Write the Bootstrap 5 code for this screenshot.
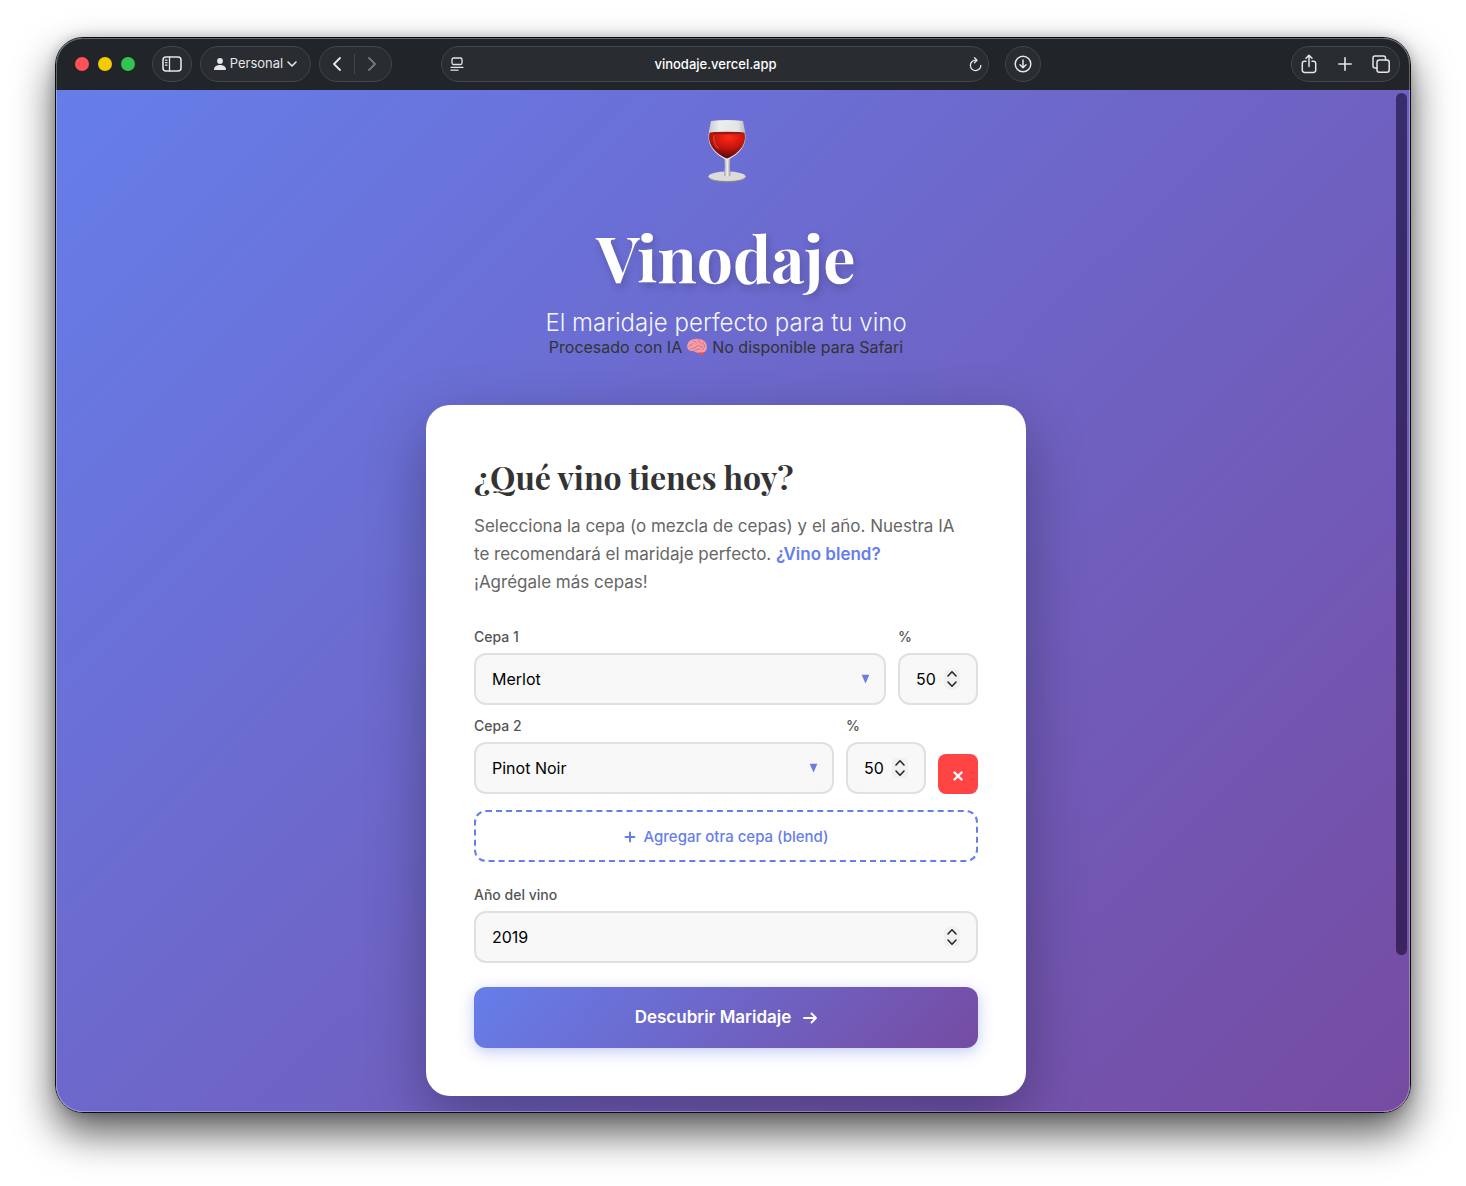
<!DOCTYPE html>
<html lang="es">
<head>
<meta charset="utf-8">
<meta name="viewport" content="width=device-width, initial-scale=1">
<title>Vinodaje</title>
<link href="https://cdn.jsdelivr.net/npm/bootstrap@5.3.0/dist/css/bootstrap.min.css" rel="stylesheet">
<script src="https://cdn.jsdelivr.net/npm/bootstrap@5.3.0/dist/js/bootstrap.bundle.min.js" defer></script>
<style>
  body { font-family: Inter, "Liberation Sans", sans-serif; background: #fff; color: #333; }
  .browser { margin: 37px 55px 73px; border: 1px solid #0b0b10; border-radius: 28px; overflow: hidden; box-shadow: 0 20px 40px rgba(0,0,0,.65), 0 0 12px rgba(0,0,0,.2); }
  .browser::after { content: ""; position: absolute; inset: 0; border: 1px solid rgba(255,255,255,.3); border-radius: 27px; pointer-events: none; }
  .toolbar { height: 52px; padding: 0 10px 0 19px; background: #212429; color: #e4e6e8; font-size: 13px; font-weight: 500; }
  .side { flex: 1 1 0; }
  .lights { gap: 9px; }
  .dot { width: 14px; height: 14px; border-radius: 50%; }
  .dot-r { background: #ff5257; } .dot-y { background: #f5cb00; } .dot-g { background: #2fc553; }
  .pill { height: 36px; background: #292c31; border: 1px solid #42454a; border-radius: 18px; color: inherit; }
  .pill button { background: none; border: 0; padding: 0; color: inherit; display: flex; }
  .round { width: 36px; }
  .panel-btn { width: 40px; margin-left: 9px; }
  .profile { width: 111px; }
  .nav-pill { width: 73px; padding: 0 14px 0 12px; }
  .nav-pill .split { width: 1px; height: 20px; background: #42454a; }
  .dim { opacity: .4; }
  .address { width: 548px; padding: 0 6px 0 8px; }
  .address input { background: none; border: 0; color: #fff; text-align: center; min-width: 0; outline: 0; font-weight: 500; padding: 2px 2px 0 0; }
  .centre { margin-left: 7px; }
  .share { width: 109px; padding: 0 9px; }
  svg { fill: none; stroke: currentColor; stroke-linecap: round; stroke-linejoin: round; display: block; flex-shrink: 0; }
  svg.solid { stroke: none; }
  .page { background: linear-gradient(135deg, #667eea 0%, #764ba2 100%); padding: 29px 14px 16px 0; }
  .thumb { position: absolute; top: 3px; right: 3px; width: 11px; height: 862px; border-radius: 6px; background: rgba(20,10,50,.6); }
  .title { font-family: "Playfair Display", "Liberation Serif", serif; font-weight: 700; font-size: 64px; line-height: 74px; margin: 37px 0 14px; color: #fff; text-shadow: 2px 4px 8px rgba(0,0,0,.2); }
  .tagline { font-size: 24px; line-height: 29px; font-weight: 300; color: rgba(255,255,255,.95); }
  .notice { font-size: 16px; line-height: 20px; }
  .wine-card { width: 600px; max-width: 100%; margin: 48px auto 0; padding: 48px; background: #fff; border-radius: 24px; box-shadow: 0 20px 60px rgba(0,0,0,.3); }
  .wine-card h2 { font-family: "Playfair Display", "Liberation Serif", serif; font-weight: 700; font-size: 32px; line-height: 47px; margin-bottom: 12px; }
  .intro { font-size: 17px; line-height: 28px; color: #666; margin-bottom: 32px; padding-right: 20px; }
  .intro a { color: #667eea; font-weight: 600; text-decoration: none; }
  .field-label { display: block; font-size: 14px; line-height: 17px; font-weight: 500; color: #555; margin-bottom: 8px; }
  .field { height: 52px; border: 2px solid #e0e0e0; border-radius: 12px; background: #f8f8f8; padding: 0 16px; font-size: 16px; color: #000; appearance: none; -moz-appearance: textfield; }
  .field::-webkit-inner-spin-button { -webkit-appearance: none; margin: 0; }
  .pct { width: 80px; flex-shrink: 0; }
  .mark-end { position: absolute; right: 16px; top: 50%; transform: translateY(-50%); pointer-events: none; }
  .stepper { color: #222; right: 18px; }
  .gap-field { gap: 12px; }
  .remove { width: 40px; height: 40px; border: 0; border-radius: 8px; background: #ff4444; color: #fff; padding: 4px 0 0; }
  .add { height: 52px; margin: 16px 0 24px; padding: 2px 0 0; border: 2px dashed #667eea; border-radius: 12px; background: #fff; color: #667eea; font-size: 15px; font-weight: 500; }
  .go { height: 61px; margin-top: 24px; border: 0; border-radius: 12px; background: linear-gradient(135deg, #667eea 0%, #764ba2 100%); color: #fff; font-size: 17px; font-weight: 600; box-shadow: 0 4px 15px rgba(102,126,234,.4); }
</style>
</head>
<body>
<div class="browser position-relative">
  <header class="toolbar d-flex align-items-center">
    <div class="side d-flex align-items-center gap-2">
      <div class="lights d-flex"><span class="dot dot-r"></span><span class="dot dot-y"></span><span class="dot dot-g"></span></div>
      <button class="pill panel-btn d-flex align-items-center justify-content-center p-0" aria-label="Barra lateral">
        <svg width="20" height="16" viewBox="0 0 20 16" stroke-width="1.6"><rect x="1" y="1" width="18" height="14" rx="3"/><path d="M7.500 1v14M3.500 4.200h1.500M3.500 6.700h1.500M3.500 9.200h1.500" stroke-width="1.300"/></svg>
      </button>
      <button class="pill profile d-flex align-items-center px-0 justify-content-center">
        <svg class="solid" width="12" height="12" viewBox="0 0 12 12"><g fill="currentColor"><circle cx="6" cy="3" r="2.900"/><path d="M.5 12c-.4 0-.5-.4-.5-.8C.2 8.700 2.800 7.100 6 7.100s5.800 1.600 6 4.100c0 .4-.1.8-.5.8z"/></g></svg>
        <span class="ms-1 me-1">Personal</span>
        <svg width="10" height="6" viewBox="0 0 10 6" stroke-width="1.600"><path d="M1 1l4 4 4-4"/></svg>
      </button>
      <div class="pill nav-pill d-flex align-items-center justify-content-between">
        <button aria-label="Atrás"><svg width="9" height="14" viewBox="0 0 9 14" stroke-width="1.800"><path d="M8 1L2 7l6 6"/></svg></button>
        <span class="split"></span>
        <button class="dim" aria-label="Adelante"><svg width="9" height="14" viewBox="0 0 9 14" stroke-width="1.800"><path d="M1 1l6 6-6 6"/></svg></button>
      </div>
    </div>
    <div class="centre d-flex align-items-center gap-3">
      <div class="pill address d-flex align-items-center">
        <svg width="14" height="14" viewBox="0 0 14 14" stroke-width="1.300"><rect x="2" y="1" width="10" height="6.500" rx="1.500"/><path d="M1 10.300h12M1 13.200h7"/></svg>
        <input class="flex-grow-1" type="text" value="vinodaje.vercel.app" aria-label="Dirección">
        <button aria-label="Recargar"><svg width="13" height="15" viewBox="0 0 13 15" stroke-width="1.300"><path d="M7 3.200H6.500a5.200 5.200 0 1 0 5.300 5.200M5.500.8L8 3.200 5.500 5.700"/></svg></button>
      </div>
      <button class="pill round d-flex align-items-center justify-content-center p-0" aria-label="Descargas">
        <svg width="18" height="18" viewBox="0 0 18 18" stroke-width="1.500"><circle cx="9" cy="9" r="7.800"/><path d="M9 5v7.500M6 9.700l3 3 3-3"/></svg>
      </button>
    </div>
    <div class="side d-flex justify-content-end">
      <div class="pill share d-flex align-items-center justify-content-between">
        <button aria-label="Compartir"><svg width="16" height="20" viewBox="0 0 16 20" stroke-width="1.500"><path d="M5 7.200H3.500A2.200 2.200 0 0 0 1.300 9.400v6.800a2.200 2.200 0 0 0 2.200 2.200h9a2.200 2.200 0 0 0 2.200-2.200V9.400a2.200 2.200 0 0 0-2.200-2.200H11M8 12.500V1.500M5 4.200l3-3 3 3"/></svg></button>
        <button aria-label="Nueva pestaña"><svg width="14" height="14" viewBox="0 0 14 14" stroke-width="1.600"><path d="M7 .8v12.400M.8 7h12.400"/></svg></button>
        <button aria-label="Pestañas"><svg width="18" height="18" viewBox="0 0 18 18" stroke-width="1.500"><rect x="5" y="5" width="12.200" height="12.200" rx="2.300"/><path d="M5 13H3a2 2 0 0 1-2-2V3a2 2 0 0 1 2-2h8.500a2 2 0 0 1 2 2v2"/></svg></button>
      </div>
    </div>
  </header>

  <main class="page position-relative">
    <div class="thumb"></div>
    <div class="d-flex flex-column align-items-center text-center">
      <svg class="solid" width="64" height="64" viewBox="0 0 64 64" role="img" aria-label="Copa de vino">
        <defs>
          <radialGradient id="wine" cx=".55" cy=".15" r=".85"><stop offset="0" stop-color="#ff2a18"/><stop offset=".5" stop-color="#c9150c"/><stop offset="1" stop-color="#4d0b10"/></radialGradient>
          <linearGradient id="bowl" x1="0" x2="1"><stop offset="0" stop-color="#c9c9cc"/><stop offset=".3" stop-color="#eceeee"/><stop offset=".8" stop-color="#e2e4e5"/><stop offset="1" stop-color="#b5b6bb"/></linearGradient>
          <linearGradient id="stem" x1="0" x2="1"><stop offset="0" stop-color="#9c9ca5"/><stop offset=".5" stop-color="#f2f2f4"/><stop offset="1" stop-color="#96959c"/></linearGradient>
        </defs>
        <ellipse cx="33" cy="58.500" rx="18.500" ry="5" fill="#8c8992"/>
        <ellipse cx="33" cy="57.300" rx="18.500" ry="4.800" fill="#dcdcda"/>
        <path d="M30 38h6.500l-.8 9 .8 9.500c-1.500 1.300-5 1.300-6.500 0l.8-9.500z" fill="url(#stem)"/>
        <path d="M17 2Q33 0 49 2c1 6 3 12 2.500 18C50.500 31 40 38 33 41 26 38 15.500 31 14.500 20 14 14 16 8 17 2z" fill="url(#bowl)"/>
        <path d="M15.500 14h35c.5 3 .6 5 .2 7C49 31 39.500 37 33 39.500 26.500 37 17 31 15.300 21c-.4-2-.2-4 .2-7z" fill="url(#wine)"/>
        <ellipse cx="33" cy="14" rx="17.300" ry="1.300" fill="#9b1715"/>
        <path d="M20 17c-1 5 1 9 4 12" stroke="#ff7565" stroke-width="1.500" opacity=".4"/>
      </svg>
      <h1 class="title">Vinodaje</h1>
      <p class="tagline mb-0">El maridaje perfecto para tu vino</p>
      <p class="notice mb-0 d-flex align-items-center justify-content-center">Procesado con IA
        <svg class="solid mx-1" width="22" height="20" viewBox="0 0 22 20" role="img" aria-label="Cerebro">
          <path d="M11.500 14.500c2 0 5-.5 6.500.5 0 2-1 3.700-2.300 3.800-1.800-.4-3.700-1.800-4.200-4.300z" fill="#c9596e"/>
          <path d="M1.300 10.500C.6 6 3.500 3 7 2.200c4-1.200 9-.5 11.800 2.300 2.300 2.200 2.600 6.500 1.200 9-1.500 2.200-4 2-6 1.700-2.500 1-5 .5-6.500-1.500-2.500.7-5.700-.2-6.200-3.200z" fill="#f49da6"/>
          <path d="M3 9.500c1.500-2.500 3-1 4-3M7 3.500c1 2 3 .5 4 2.500M12.500 3c-.5 2 2 2 3 4M4.500 12c2-1.500 4 0 5.500-2s3.500-2 4.500-.5M9 13.500c2-.5 3-2 5-1.500M17 5.500c.5 2 2 2.500 1.500 4.500M15.500 9c1 1 .5 2.500 2 3.500" stroke="#d9707f" stroke-width="1"/>
        </svg>
        No disponible para Safari</p>
    </div>

    <form class="wine-card" onsubmit="return false">
      <h2>¿Qué vino tienes hoy?</h2>
      <p class="intro">Selecciona la cepa (o mezcla de cepas) y el año. Nuestra IA te recomendará el maridaje perfecto. <a href="#">¿Vino blend?</a> ¡Agrégale más cepas!</p>

      <div class="d-flex flex-column gap-field">
        <div class="d-flex align-items-end gap-field">
          <div class="flex-grow-1">
            <label class="field-label" for="cepa1">Cepa 1</label>
            <div class="position-relative">
              <select class="field w-100" id="cepa1"><option>Merlot</option><option>Malbec</option></select>
              <svg class="mark-end solid" width="9" height="9" viewBox="0 0 9 9"><path d="M.5 0h8L4.500 9z" fill="#6c7ddf"/></svg>
            </div>
          </div>
          <div class="pct">
            <label class="field-label" for="pct1">%</label>
            <div class="position-relative">
              <input class="field w-100" type="number" id="pct1" value="50">
              <svg class="mark-end stepper" width="16" height="20" viewBox="0 0 16 20" stroke-width="1.500"><rect width="16" height="20" rx="5" fill="#f0f0f0" stroke="none"/><path d="M4 7l4-4.300L12 7M4 13l4 4.300 4-4.300"/></svg>
            </div>
          </div>
        </div>
        <div class="d-flex align-items-end gap-field">
          <div class="flex-grow-1">
            <label class="field-label" for="cepa2">Cepa 2</label>
            <div class="position-relative">
              <select class="field w-100" id="cepa2"><option>Pinot Noir</option><option>Malbec</option></select>
              <svg class="mark-end solid" width="9" height="9" viewBox="0 0 9 9"><path d="M.5 0h8L4.500 9z" fill="#6c7ddf"/></svg>
            </div>
          </div>
          <div class="pct">
            <label class="field-label" for="pct2">%</label>
            <div class="position-relative">
              <input class="field w-100" type="number" id="pct2" value="50">
              <svg class="mark-end stepper" width="16" height="20" viewBox="0 0 16 20" stroke-width="1.500"><rect width="16" height="20" rx="5" fill="#f0f0f0" stroke="none"/><path d="M4 7l4-4.300L12 7M4 13l4 4.300 4-4.300"/></svg>
            </div>
          </div>
          <button type="button" class="remove d-flex align-items-center justify-content-center" aria-label="Quitar cepa 2">
            <svg width="12" height="12" viewBox="0 0 12 12" stroke-width="2.400"><path d="M2.500 2.500l7 7M9.500 2.500l-7 7"/></svg>
          </button>
        </div>
      </div>

      <button type="button" class="add w-100 d-flex align-items-center justify-content-center gap-2">
        <svg width="12" height="12" viewBox="0 0 12 12" stroke-width="2"><path d="M6 1.500v9M1.500 6h9"/></svg>
        Agregar otra cepa (blend)
      </button>

      <label class="field-label" for="anio">Año del vino</label>
      <div class="position-relative">
        <input class="field w-100" type="number" id="anio" value="2019">
        <svg class="mark-end stepper" width="16" height="20" viewBox="0 0 16 20" stroke-width="1.500"><rect width="16" height="20" rx="5" fill="#f0f0f0" stroke="none"/><path d="M4 7l4-4.300L12 7M4 13l4 4.300 4-4.300"/></svg>
      </div>

      <button type="submit" class="go w-100 d-flex align-items-center justify-content-center gap-field">
        Descubrir Maridaje
        <svg width="14" height="12" viewBox="0 0 14 12" stroke-width="1.800"><path d="M1 6h12M8.500 1.500L13 6l-4.500 4.500"/></svg>
      </button>
    </form>
  </main>
</div>
</body>
</html>
